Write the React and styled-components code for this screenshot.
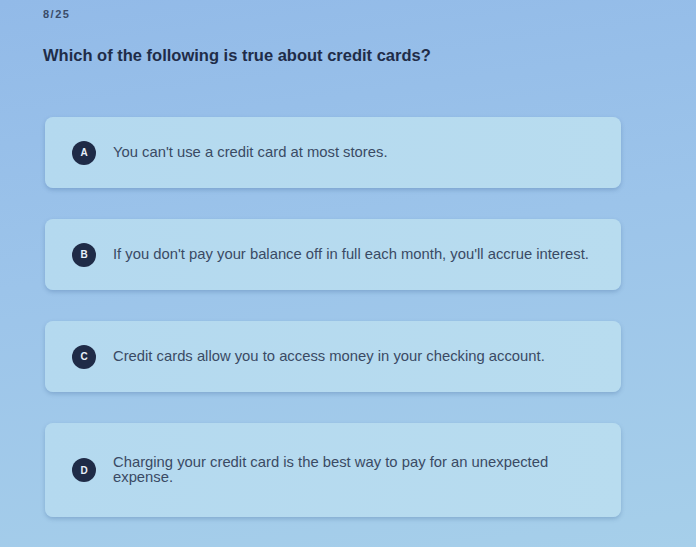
import React from 'react';
import styled, { createGlobalStyle } from 'styled-components';

const options = [
    { letter: 'A', text: "You can't use a credit card at most stores." },
    { letter: 'B', text: "If you don't pay your balance off in full each month, you'll accrue interest." },
    { letter: 'C', text: 'Credit cards allow you to access money in your checking account.' },
    { letter: 'D', text: 'Charging your credit card is the best way to pay for an unexpected expense.', tall: true },
];

const App = () => {
    return (
        <>
            <GlobalStyle />
            <Page>
                <Counter>8/25</Counter>
                <Question>Which of the following is true about credit cards?</Question>
                <List>
                    {options.map((o) => (
                        <Card key={o.letter} $tall={o.tall}>
                            <Badge>{o.letter}</Badge>
                            <OptionText>{o.text}</OptionText>
                        </Card>
                    ))}
                </List>
            </Page>
        </>
    );
};

export default App;


const GlobalStyle = createGlobalStyle`
    html, body {
        margin: 0;
        padding: 0;
    }
    body {
        font-family: "Liberation Sans", Arial, sans-serif;
    }
`;
const Page = styled.div`
    width: 696px;
    height: 547px;
    box-sizing: border-box;
    padding: 8px 75px 0 43px;
    background: linear-gradient(172deg, #92bae8 0%, #9cc4ea 45%, #a6cfea 100%);
    overflow: hidden;
`;
const Counter = styled.div`
    font-size: 11px;
    font-weight: 700;
    letter-spacing: 1.5px;
    color: #2b3852;
    opacity: 0.85;
`;
const Question = styled.div`
    margin-top: 26px;
    font-size: 16.5px;
    font-weight: 700;
    color: #1f2c48;
`;
const List = styled.div`
    display: flex;
    flex-direction: column;
    gap: 31px;
    margin-top: 52px;
    margin-left: 2px;
`;
const Card = styled.div`
    display: flex;
    align-items: center;
    gap: 17px;
    box-sizing: border-box;
    min-height: ${(p) => (p.$tall ? '94px' : '71px')};
    padding: 0 18px 0 27px;
    border-radius: 8px;
    background: linear-gradient(90deg, #b4d9ef, #b8dcef);
    box-shadow: 0 2px 4px rgba(50, 90, 140, 0.28);
`;
const Badge = styled.div`
    flex: none;
    width: 24px;
    height: 24px;
    border-radius: 50%;
    background: #1f2b47;
    color: #e8f0fa;
    font-size: 10px;
    font-weight: 700;
    display: flex;
    align-items: center;
    justify-content: center;
`;
const OptionText = styled.div`
    font-size: 14.8px;
    line-height: 15px;
    color: #3a4a64;
`;
